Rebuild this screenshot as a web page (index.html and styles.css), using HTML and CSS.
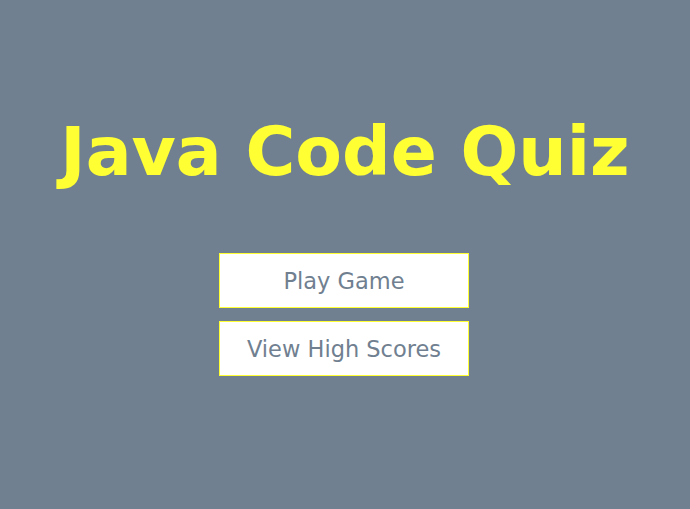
FILE: index.html
```html
<!DOCTYPE html>
<html>
<head>
<meta charset="utf-8">
<link rel="stylesheet" href="styles.css">
</head>
<body>
<main class="start">
  <h1 class="title">Java Code Quiz</h1>
  <div class="menu">
    <button class="btn">Play Game</button>
    <button class="btn">View High Scores</button>
  </div>
</main>
</body>
</html>
```
FILE: styles.css
```css
html, body {
  margin: 0;
  padding: 0;
  height: 100%;
}
body {
  background: #708090;
  font-family: "DejaVu Sans", Verdana, sans-serif;
}
.start {
  display: flex;
  flex-direction: column;
  align-items: center;
  padding-top: 109px;
}
.title {
  margin: 0;
  color: #ffff33;
  font-size: 68px;
  font-weight: bold;
  line-height: 86px;
}
.menu {
  display: flex;
  flex-direction: column;
  gap: 13px;
  margin-top: 58px;
  margin-right: 2px;
}
.btn {
  width: 250px;
  height: 55px;
  background: #fff;
  border: 1px solid #ffff33;
  color: #708090;
  font-family: "DejaVu Sans", Verdana, sans-serif;
  font-size: 22.5px;
  padding: 0;
}
```
